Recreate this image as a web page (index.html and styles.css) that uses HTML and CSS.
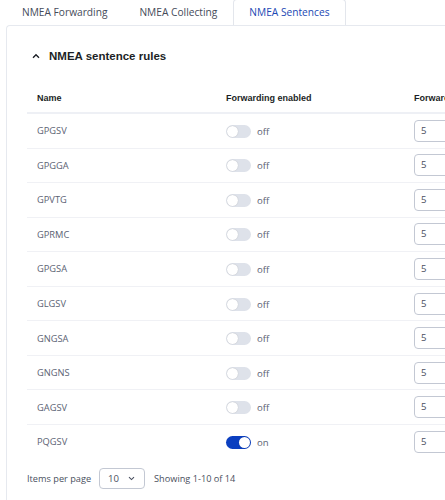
FILE: index.html
```html
<!DOCTYPE html>
<html>
<head>
<meta charset="utf-8">
<link rel="stylesheet" href="styles.css">
</head>
<body>
<div class="tabs">
  <div class="tab">NMEA Forwarding</div>
  <div class="tab">NMEA Collecting</div>
  <div class="tab active">NMEA Sentences</div>
</div>
<div class="card">
  <div class="section-head">
    <svg class="chev" width="8" height="6" viewBox="0 0 8 6"><path d="M1 4.8 L4 1.8 L7 4.8" fill="none" stroke="#1c1f26" stroke-width="1.4"/></svg>
    <h2>NMEA sentence rules</h2>
  </div>
  <table class="rules">
    <colgroup><col class="c1"><col class="c2"><col class="c3"></colgroup>
    <thead>
      <tr><th>Name</th><th>Forwarding enabled</th><th>Forwarding interval</th></tr>
    </thead>
    <tbody>
      <tr><td>GPGSV</td><td><span class="toggle"></span><span class="state">off</span></td><td><div class="num">5</div></td></tr>
      <tr><td>GPGGA</td><td><span class="toggle"></span><span class="state">off</span></td><td><div class="num">5</div></td></tr>
      <tr><td>GPVTG</td><td><span class="toggle"></span><span class="state">off</span></td><td><div class="num">5</div></td></tr>
      <tr><td>GPRMC</td><td><span class="toggle"></span><span class="state">off</span></td><td><div class="num">5</div></td></tr>
      <tr><td>GPGSA</td><td><span class="toggle"></span><span class="state">off</span></td><td><div class="num">5</div></td></tr>
      <tr><td>GLGSV</td><td><span class="toggle"></span><span class="state">off</span></td><td><div class="num">5</div></td></tr>
      <tr><td>GNGSA</td><td><span class="toggle"></span><span class="state">off</span></td><td><div class="num">5</div></td></tr>
      <tr><td>GNGNS</td><td><span class="toggle"></span><span class="state">off</span></td><td><div class="num">5</div></td></tr>
      <tr><td>GAGSV</td><td><span class="toggle"></span><span class="state">off</span></td><td><div class="num">5</div></td></tr>
      <tr><td>PQGSV</td><td><span class="toggle on"></span><span class="state">on</span></td><td><div class="num">5</div></td></tr>
    </tbody>
  </table>
  <div class="footer">
    <span class="label">Items per page</span>
    <div class="select"><span>10</span><svg width="7" height="5" viewBox="0 0 7 5"><path d="M1 1.2 L3.5 3.6 L6 1.2" fill="none" stroke="#4a5060" stroke-width="1.1"/></svg></div>
    <span class="label">Showing 1-10 of 14</span>
  </div>
</div>
</body>
</html>
```

FILE: styles.css
```css
html, body {
  margin: 0;
  padding: 0;
  background: #fff;
  overflow: hidden;
  width: 445px;
  height: 500px;
}
body {
  font-family: "Open Sans", "Noto Sans", sans-serif;
  color: #4a5060;
}
.tabs {
  display: flex;
  height: 25px;
  padding-left: 6px;
  position: relative;
  z-index: 2;
}
.tab {
  padding: 0 16px;
  font-size: 10.2px;
  line-height: 24px;
  color: #454b59;
  white-space: nowrap;
  box-sizing: border-box;
  height: 25px;
}
.tab.active {
  color: #1c49b4;
  background: #fff;
  border: 1px solid #e3e6ec;
  border-bottom: none;
  border-radius: 4px 4px 0 0;
  height: 26px;
  padding: 0 15px;
  margin-top: -1px;
  line-height: 25px;
}
.card {
  margin-left: 6px;
  width: 439px;
  height: 475px;
  border: 1px solid #e6e9ef;
  border-right: none;
  border-bottom: none;
  border-radius: 4px 0 0 0;
  padding: 20px 0 0 20px;
  box-sizing: border-box;
  overflow: hidden;
}
.section-head {
  display: flex;
  align-items: center;
  gap: 9px;
  height: 20px;
  padding-left: 5px;
}
.chev { display: block; }
.section-head h2 {
  margin: 0;
  font-family: "Liberation Sans", Arial, sans-serif;
  font-weight: bold;
  font-size: 11.5px;
  color: #1c1f26;
}
.rules {
  margin-top: 17px;
  border-collapse: collapse;
  width: 700px;
  table-layout: fixed;
}
.c1 { width: 189px; }
.c2 { width: 188px; }
.c3 { width: 323px; }
.rules th {
  text-align: left;
  font-family: "Liberation Sans", Arial, sans-serif;
  font-weight: bold;
  font-size: 9px;
  color: #1c1f26;
  padding: 0 0 0 10px;
  height: 29px;
  border-bottom: 2px solid #eef0f5;
  white-space: nowrap;
}
.rules td {
  height: 33.55px;
  padding: 0 0 0 10px;
  border-bottom: 1px solid #f0f1f5;
  font-size: 9.3px;
  color: #5b6273;
  vertical-align: middle;
  box-sizing: content-box;
}
.rules tbody tr:last-child td { border-bottom: none; }
.toggle {
  display: inline-block;
  vertical-align: middle;
  width: 25px;
  height: 13px;
  border-radius: 7px;
  background: #dee2ea;
  position: relative;
  margin-right: 6px;
}
.toggle::after {
  content: "";
  position: absolute;
  left: 1px;
  top: 1px;
  width: 11px;
  height: 11px;
  border-radius: 50%;
  background: #fff;
  box-shadow: 0 0 1px rgba(0,0,0,0.25);
}
.toggle.on { background: #0b3fc0; }
.toggle.on::after { left: 13px; }
.state {
  vertical-align: middle;
  font-size: 9.6px;
  color: #5b6273;
}
.num {
  width: 120px;
  height: 22px;
  box-sizing: border-box;
  border: 1px solid #c3c8d3;
  border-radius: 4px;
  padding-left: 6px;
  line-height: 20px;
  font-size: 9.6px;
  color: #4a5060;
}
.footer {
  display: flex;
  align-items: center;
  margin-top: 10px;
  height: 21px;
}
.footer .label {
  font-size: 9.2px;
  color: #4a5060;
  white-space: nowrap;
}
.select {
  margin: 0 9px 0 8px;
  width: 46px;
  height: 21px;
  box-sizing: border-box;
  border: 1px solid #c3c8d3;
  border-radius: 4px;
  display: flex;
  align-items: center;
  padding-left: 8px;
  gap: 9px;
  font-size: 9.6px;
  color: #4a5060;
}
.select svg { display: block; }
```
